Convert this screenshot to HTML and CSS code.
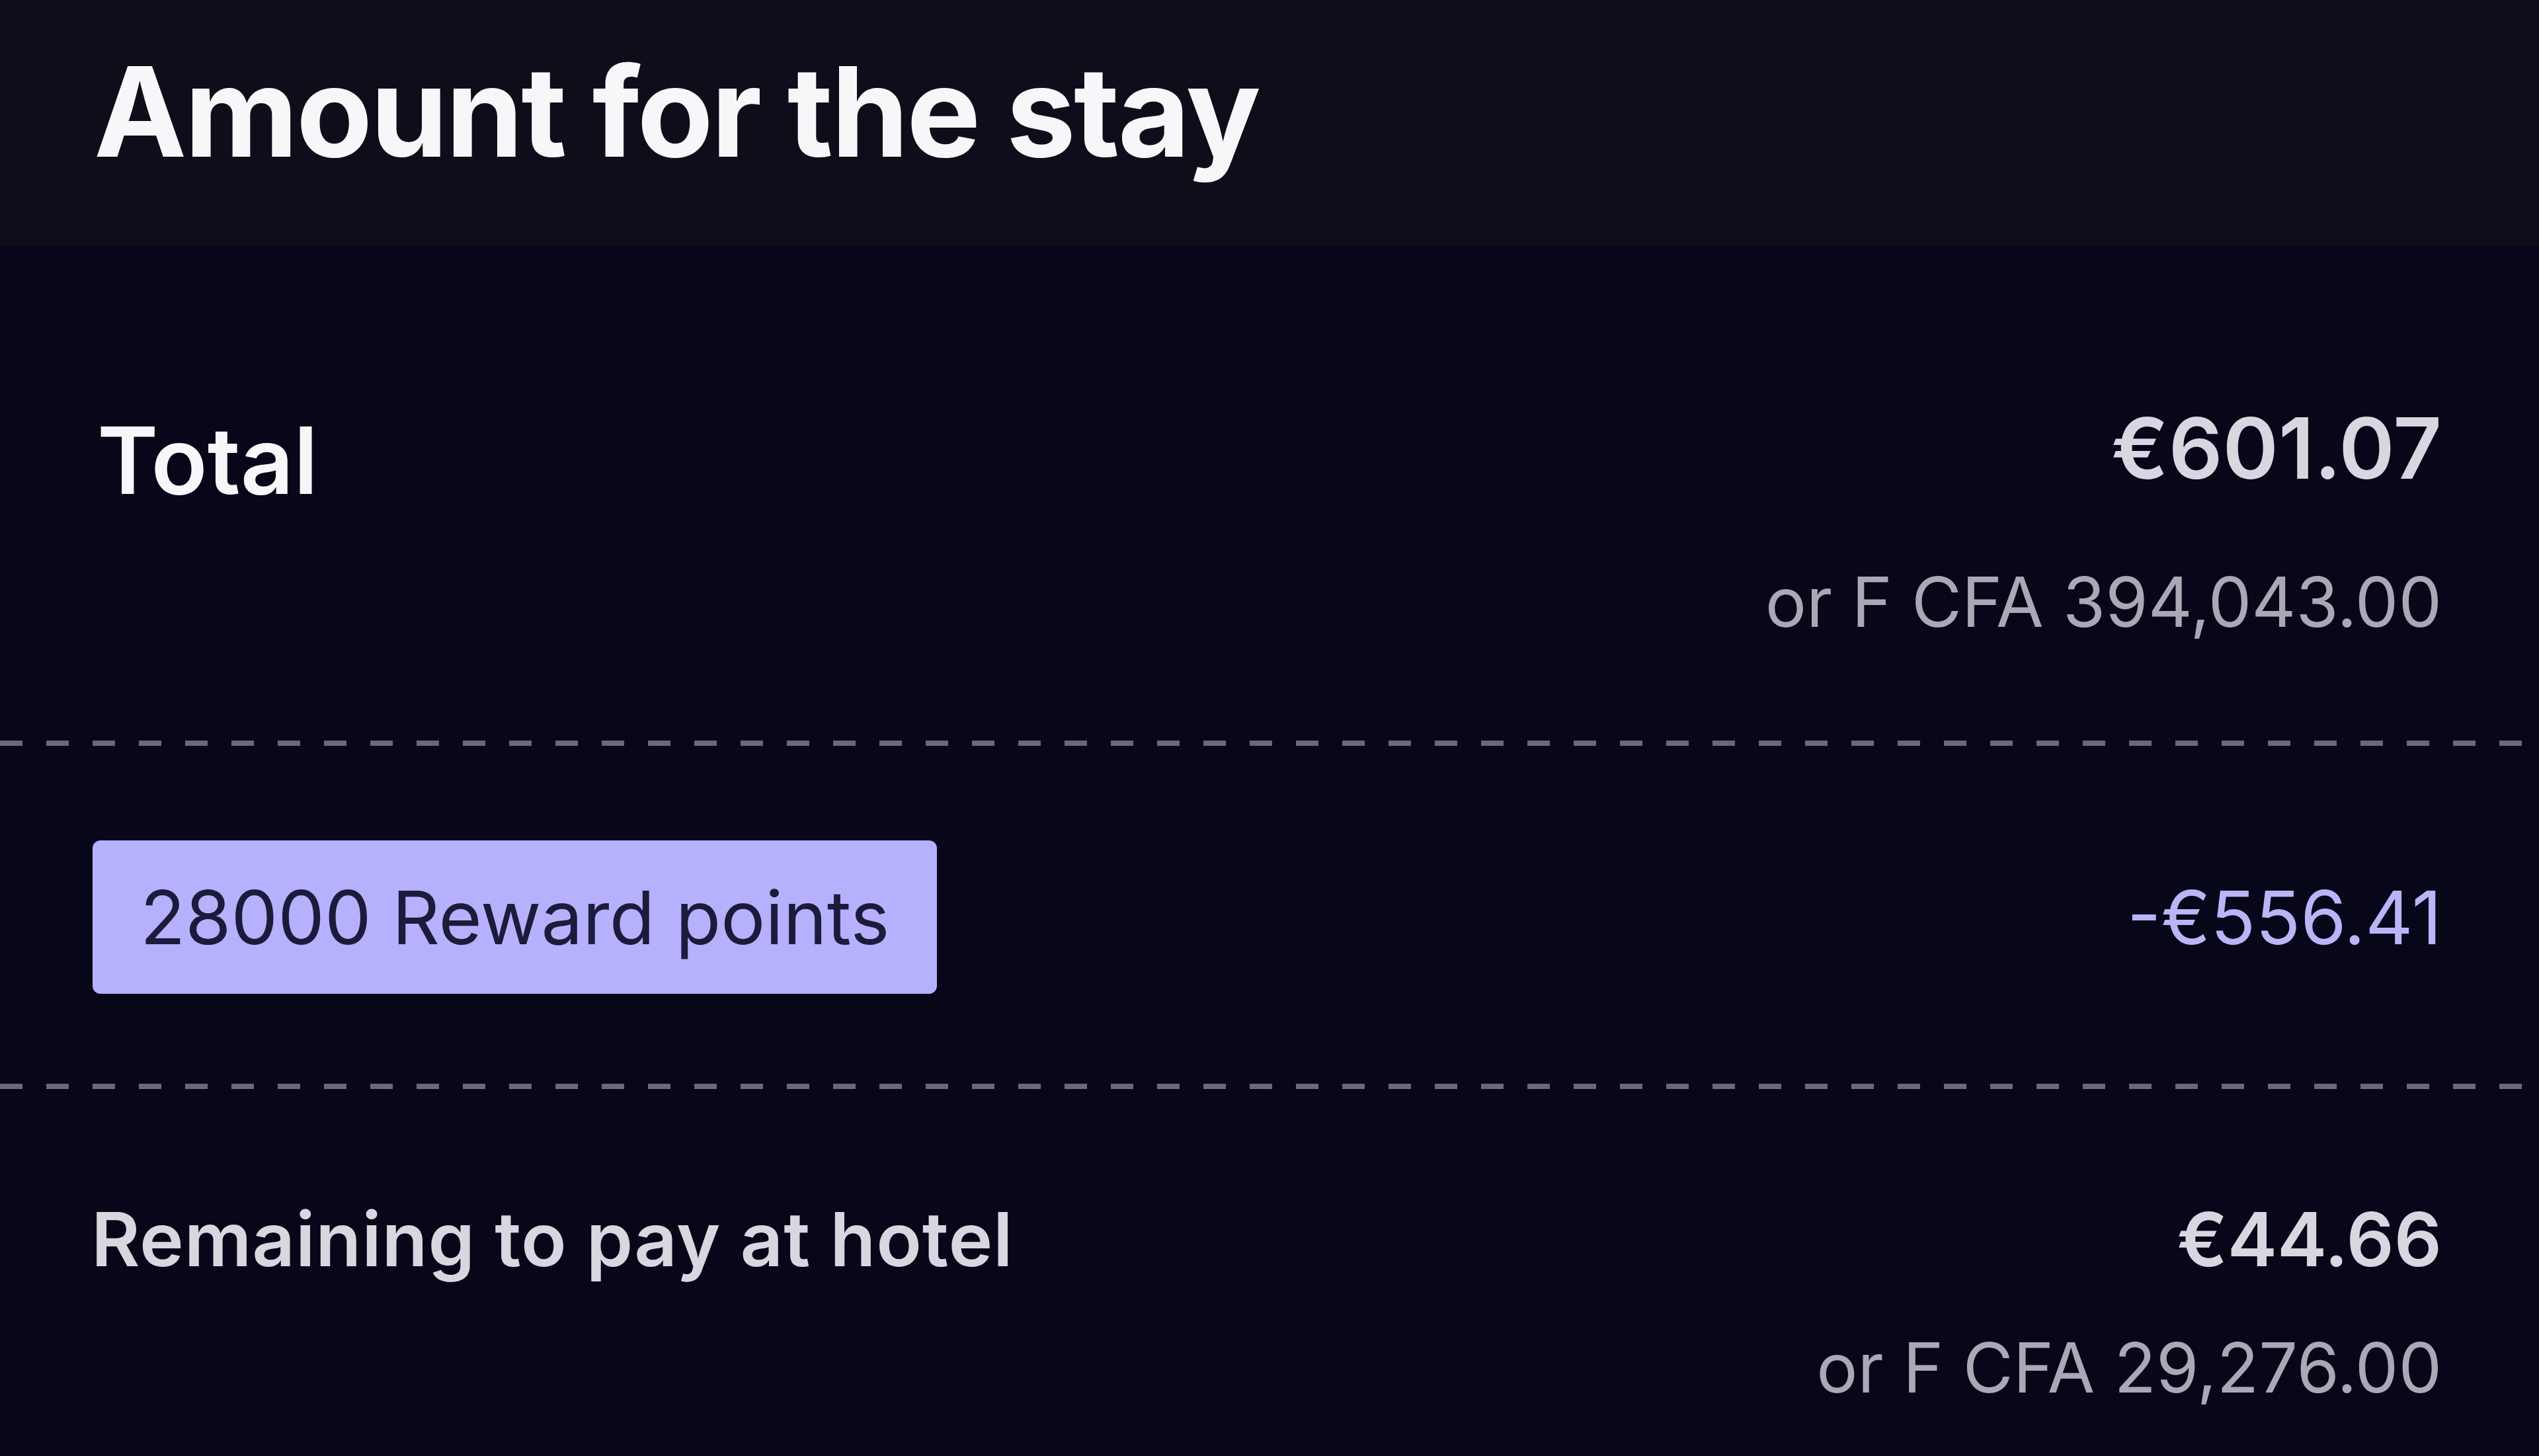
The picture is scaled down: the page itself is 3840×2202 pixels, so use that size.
FILE: index.html
```html
<!DOCTYPE html>
<html lang="en">
<head>
    <meta charset="UTF-8">
    <meta name="viewport" content="width=device-width, initial-scale=1.0">
    <title>Amount for the stay</title>
    <link rel="stylesheet" href="styles.css">
</head>
<body>
    <header class="page-header">
        <h1>Amount for the stay</h1>
    </header>

    <main class="summary">
        <div class="row row-total">
            <span class="label label-total">Total</span>
            <div class="amounts">
                <span class="amount amount-big">€601.07</span>
                <span class="amount-alt alt-total">or F CFA 394,043.00</span>
            </div>
        </div>

        <div class="divider"></div>

        <div class="row row-points">
            <span class="points-badge">28000 Reward points</span>
            <span class="amount amount-discount">-€556.41</span>
        </div>

        <div class="divider"></div>

        <div class="row row-remaining">
            <span class="label label-remaining">Remaining to pay at hotel</span>
            <div class="amounts">
                <span class="amount amount-mid">€44.66</span>
                <span class="amount-alt alt-remaining">or F CFA 29,276.00</span>
            </div>
        </div>
    </main>
</body>
</html>
```

FILE: styles.css
```css
:root {
    --header-bg: #0e0e1b;
    --page-bg: #08071a;
    --text-white: #f7f7fa;
    --text-light: #d7d7df;
    --text-muted: #a9a9b5;
    --dash-color: #6a697c;
    --badge-bg: #b5b1fd;
    --badge-text: #1d1b3b;
    --accent: #b9b5f7;
}

html, body {
    margin: 0;
    padding: 0;
}

body {
    font-family: Inter, "Noto Sans", "Liberation Sans", sans-serif;
    background-color: var(--page-bg);
    min-height: 100vh;
}

.page-header {
    background-color: var(--header-bg);
    height: 372px;
    box-sizing: border-box;
    padding: 75px 0 0 142px;
}

.page-header h1 {
    margin: 0;
    font-size: 188px;
    line-height: 1;
    font-weight: 700;
    color: var(--text-white);
    letter-spacing: -3px;
}

.summary {
    padding-top: 242px;
}

.row {
    display: flex;
    justify-content: space-between;
    padding: 0 147px;
}

.amounts {
    display: flex;
    flex-direction: column;
    align-items: flex-end;
}

.label {
    line-height: 1;
}

.label-total {
    font-size: 140px;
    font-weight: 600;
    color: var(--text-white);
    margin-top: 12px;
}

.label-remaining {
    font-size: 113px;
    font-weight: 600;
    color: var(--text-light);
    letter-spacing: 0.8px;
}

.amount {
    line-height: 1;
    font-weight: 600;
    color: var(--text-light);
}

.amount-big {
    font-size: 128px;
}

.amount-mid {
    font-size: 113px;
}

.amount-alt {
    font-size: 104px;
    line-height: 1;
    color: var(--text-muted);
}

.alt-total {
    margin-top: 116px;
}

.alt-remaining {
    margin-top: 85px;
}

.divider {
    height: 8px;
    margin-top: 158px;
    background-image: repeating-linear-gradient(to right, var(--dash-color) 0 34px, transparent 34px 70px);
}

.row-points {
    align-items: center;
    padding-top: 143px;
    padding-bottom: 136px;
    padding-left: 140px;
}

.points-badge {
    background-color: var(--badge-bg);
    color: var(--badge-text);
    font-size: 112px;
    line-height: 1;
    padding: 60px 72px;
    border-radius: 12px;
}

.amount-discount {
    font-size: 112px;
    font-weight: 400;
    color: var(--accent);
}

.row-points + .divider {
    margin-top: 0;
}

.row-remaining {
    padding-top: 171px;
    padding-left: 138px;
}
```
